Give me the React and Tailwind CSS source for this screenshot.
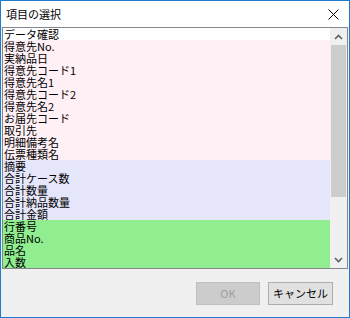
import React from 'react';

const items = [
  { label: 'データ確認', bg: 'bg-white' },
  { label: '得意先No.', bg: 'bg-[#fff0f5]' },
  { label: '実納品日', bg: 'bg-[#fff0f5]' },
  { label: '得意先コード1', bg: 'bg-[#fff0f5]' },
  { label: '得意先名1', bg: 'bg-[#fff0f5]' },
  { label: '得意先コード2', bg: 'bg-[#fff0f5]' },
  { label: '得意先名2', bg: 'bg-[#fff0f5]' },
  { label: 'お届先コード', bg: 'bg-[#fff0f5]' },
  { label: '取引先', bg: 'bg-[#fff0f5]' },
  { label: '明細備考名', bg: 'bg-[#fff0f5]' },
  { label: '伝票種類名', bg: 'bg-[#fff0f5]' },
  { label: '摘要', bg: 'bg-[#e6e6fa]' },
  { label: '合計ケース数', bg: 'bg-[#e6e6fa]' },
  { label: '合計数量', bg: 'bg-[#e6e6fa]' },
  { label: '合計納品数量', bg: 'bg-[#e6e6fa]' },
  { label: '合計金額', bg: 'bg-[#e6e6fa]' },
  { label: '行番号', bg: 'bg-[#90ee90]' },
  { label: '商品No.', bg: 'bg-[#90ee90]' },
  { label: '品名', bg: 'bg-[#90ee90]' },
  { label: '入数', bg: 'bg-[#90ee90]' },
];

const font = { fontFamily: '"Noto Sans CJK JP", "Noto Sans", sans-serif' };

const Chevron = ({ up }) => (
  <svg width="9" height="6" viewBox="0 0 9 6">
    <path
      d={up ? 'M1 5 L4.5 1.5 L8 5' : 'M1 1 L4.5 4.5 L8 1'}
      fill="none"
      stroke="#606060"
      strokeWidth="1.6"
    />
  </svg>
);

const App = () => {
  return (
    <div
      className="w-[350px] h-[318px] border border-[#1c7dcf] bg-[#f0f0f0] flex flex-col text-black"
      style={font}
    >
      {/* title bar */}
      <div className="h-[26px] bg-white flex items-center justify-between pl-[5px] pr-[10px]">
        <span className="text-[11px] leading-none">項目の選択</span>
        <svg width="11" height="11" viewBox="0 0 11 11">
          <path d="M0.5 0.5 L10.5 10.5 M10.5 0.5 L0.5 10.5" stroke="#000" strokeWidth="1" />
        </svg>
      </div>

      {/* list box */}
      <div className="ml-[1px] mr-[1px] h-[242px] border border-[#828790] bg-white flex">
        <div className="flex-1 flex flex-col">
          {items.map((it) => (
            <div
              key={it.label}
              className={`h-[12px] ${it.bg} text-[11px] leading-[12px] pl-[1px] whitespace-nowrap`}
            >
              {it.label}
            </div>
          ))}
        </div>
        <div className="w-[17px] bg-[#f0f0f0] flex flex-col">
          <div className="h-[17px] flex items-center justify-center">
            <Chevron up />
          </div>
          <div className="mx-[1px] h-[152px] bg-[#cdcdcd]" />
          <div className="flex-1" />
          <div className="h-[17px] flex items-center justify-center">
            <Chevron />
          </div>
        </div>
      </div>

      {/* buttons */}
      <div className="flex justify-end gap-[8px] pt-[13px] pr-[16px]">
        <div className="w-[64px] h-[23px] border border-[#bfbfbf] bg-[#cccccc] text-[#a0a0a0] text-[11px] flex items-center justify-center">
          OK
        </div>
        <div className="w-[65px] h-[23px] border border-[#adadad] bg-[#e1e1e1] text-[11px] flex items-center justify-center">
          キャンセル
        </div>
      </div>
    </div>
  );
};

export default App;
